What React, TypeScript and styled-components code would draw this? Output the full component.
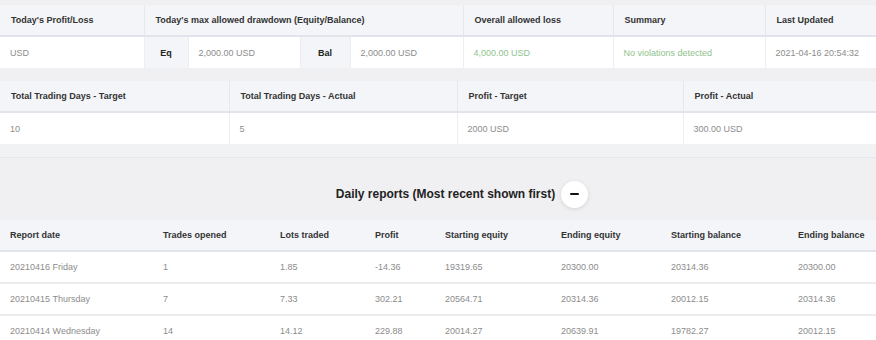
import React from "react";
import styled, { createGlobalStyle } from "styled-components";

const GlobalStyle = createGlobalStyle`
  html, body {
    margin: 0;
    padding: 0;
    background: #f0f0f2;
    font-family: "Liberation Sans", Arial, sans-serif;
  }
`;

const reports = [
  ["20210416 Friday", "1", "1.85", "-14.36", "19319.65", "20300.00", "20314.36", "20300.00"],
  ["20210415 Thursday", "7", "7.33", "302.21", "20564.71", "20314.36", "20012.15", "20314.36"],
  ["20210414 Wednesday", "14", "14.12", "229.88", "20014.27", "20639.91", "19782.27", "20012.15"],
];

const reportHeads = [
  "Report date",
  "Trades opened",
  "Lots traded",
  "Profit",
  "Starting equity",
  "Ending equity",
  "Starting balance",
  "Ending balance",
];
const reportCols = [153, 117, 95, 70, 116, 110, 127, 88];

export default function App() {
  return (
    <Page>
      <GlobalStyle />
      <Summary>
        <Table>
          <colgroup>
            <col style={{ width: 144 }} />
            <col style={{ width: 44 }} />
            <col style={{ width: 112 }} />
            <col style={{ width: 50 }} />
            <col style={{ width: 113 }} />
            <col style={{ width: 150 }} />
            <col style={{ width: 152 }} />
            <col />
          </colgroup>
          <thead>
            <tr>
              <Th>Today's Profit/Loss</Th>
              <Th colSpan={4}>Today's max allowed drawdown (Equity/Balance)</Th>
              <Th>Overall allowed loss</Th>
              <Th>Summary</Th>
              <Th>Last Updated</Th>
            </tr>
          </thead>
          <tbody>
            <tr>
              <Td>USD</Td>
              <Label>Eq</Label>
              <Td>2,000.00 USD</Td>
              <Label>Bal</Label>
              <Td>2,000.00 USD</Td>
              <Td $tone="green">4,000.00 USD</Td>
              <Td $tone="green">No violations detected</Td>
              <Td>2021-04-16 20:54:32</Td>
            </tr>
          </tbody>
        </Table>

        <Table>
          <colgroup>
            <col style={{ width: 229 }} />
            <col style={{ width: 228 }} />
            <col style={{ width: 226 }} />
            <col />
          </colgroup>
          <thead>
            <tr>
              <Th>Total Trading Days - Target</Th>
              <Th>Total Trading Days - Actual</Th>
              <Th>Profit - Target</Th>
              <Th>Profit - Actual</Th>
            </tr>
          </thead>
          <tbody>
            <tr>
              <Td>10</Td>
              <Td>5</Td>
              <Td>2000 USD</Td>
              <Td>300.00 USD</Td>
            </tr>
          </tbody>
        </Table>
        <Band />
      </Summary>

      <TitleRow>
        <Title>Daily reports (Most recent shown first)</Title>
        <ToggleButton aria-label="collapse">
          <Minus />
        </ToggleButton>
      </TitleRow>

      <ReportTable>
        <colgroup>
          {reportCols.map((w, i) => (
            <col key={i} style={{ width: w }} />
          ))}
        </colgroup>
        <thead>
          <tr>
            {reportHeads.map((h) => (
              <ReportTh key={h}>{h}</ReportTh>
            ))}
          </tr>
        </thead>
        <tbody>
          {reports.map((row) => (
            <tr key={row[0]}>
              {row.map((v, i) => (
                <ReportTd key={i}>{v}</ReportTd>
              ))}
            </tr>
          ))}
        </tbody>
      </ReportTable>
    </Page>
  );
}

const Page = styled.div`
  width: 876px;
  padding-top: 5px;
  font-size: 9px;
`;

const Summary = styled.div`
  display: flex;
  flex-direction: column;
  gap: 13px;
`;

const Table = styled.table`
  width: 100%;
  table-layout: fixed;
  border-collapse: collapse;
  background: #fff;
`;

const Th = styled.th`
  height: 30px;
  padding: 0 0 0 11px;
  text-align: left;
  font-weight: bold;
  color: #333;
  background: #f3f5f9;
  border-left: 1px solid #e4e7ec;
  border-bottom: 2px solid #e1e5eb;
  white-space: nowrap;
  &:first-child {
    border-left: none;
  }
`;

const Td = styled.td<{ $tone?: "green" }>`
  height: 31px;
  padding: 0 0 0 10px;
  color: ${(p) => (p.$tone === "green" ? "#8fc28d" : "#8c8c8c")};
  border-left: 1px solid #eceef2;
  white-space: nowrap;
  &:first-child {
    border-left: none;
  }
`;

const Label = styled.td`
  height: 31px;
  padding: 0;
  text-align: center;
  font-weight: bold;
  color: #222;
  background: #f3f5f9;
  border-left: 1px solid #eceef2;
`;

const Band = styled.div`
  height: 13px;
  margin-top: -13px;
  background: #f1f2f4;
  border-bottom: 1px solid #e6e7ea;
`;

const TitleRow = styled.div`
  display: flex;
  align-items: center;
  justify-content: center;
  gap: 6px;
  height: 52px;
  padding: 10px 0 0 48px;
`;

const Title = styled.h2`
  margin: 0;
  font-size: 12px;
  font-weight: bold;
  color: #222;
`;

const ToggleButton = styled.button`
  width: 27px;
  height: 27px;
  border: none;
  border-radius: 50%;
  background: #fff;
  box-shadow: 0 1px 4px rgba(0, 0, 0, 0.12);
  display: flex;
  align-items: center;
  justify-content: center;
  padding: 0;
  cursor: pointer;
`;

const Minus = styled.span`
  width: 9px;
  height: 2.5px;
  border-radius: 1px;
  background: #111;
`;

const ReportTable = styled.table`
  width: 100%;
  table-layout: fixed;
  border-collapse: collapse;
  background: #fff;
`;

const ReportTh = styled.th`
  height: 30px;
  padding: 0 0 0 10px;
  text-align: left;
  font-weight: bold;
  color: #333;
  background: #f3f5f9;
  border-bottom: 2px solid #e1e5eb;
  white-space: nowrap;
`;

const ReportTd = styled.td`
  height: 30px;
  padding: 0 0 0 10px;
  color: #8c8c8c;
  border-bottom: 2px solid #ececee;
  white-space: nowrap;
`;
